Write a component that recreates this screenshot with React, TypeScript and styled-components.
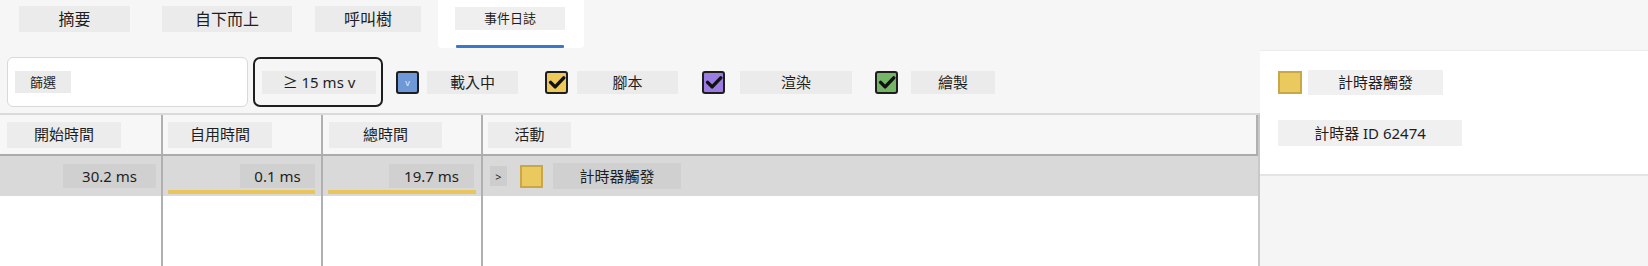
import React from "react";
import styled, { createGlobalStyle } from "styled-components";

const Global = createGlobalStyle`
  html, body { margin: 0; padding: 0; background: #f6f6f6; }
  body { font-family: "Noto Sans", "Noto Sans CJK TC", sans-serif; color: #1e1e1e; }
  * { box-sizing: border-box; }
`;

const Page = styled.div`
  width: 1648px;
  height: 266px;
  overflow: hidden;
  display: flex;
  flex-direction: column;
  background: #f6f6f6;
`;

const TabBar = styled.div`
  height: 48px;
  flex-shrink: 0;
  display: flex;
  align-items: flex-start;
  padding-left: 19px;
`;

const Tab = styled.div<{ $w: number; $ml: number }>`
  width: ${(p) => p.$w}px;
  margin-left: ${(p) => p.$ml}px;
  margin-top: 6px;
  height: 26px;
  background: #ebebeb;
  display: flex;
  align-items: center;
  justify-content: center;
  font-size: 16px;
  line-height: 1;
`;

const ActiveTab = styled.div`
  width: 146px;
  height: 48px;
  margin-left: 17px;
  background: #ffffff;
  border-radius: 0 0 4px 4px;
  display: flex;
  flex-direction: column;
  padding: 7px 0 0 17px;
`;

const ActiveLabel = styled.div`
  width: 110px;
  height: 23px;
  background: #efefef;
  display: flex;
  align-items: center;
  justify-content: center;
  font-size: 13px;
  line-height: 1;
`;

const Underline = styled.div`
  width: 108px;
  height: 3px;
  margin: auto 0 0 1px;
  background: #3a78c9;
  border-radius: 1px;
`;

const Body = styled.div`
  flex: 1;
  display: flex;
  min-height: 0;
`;

const LeftCol = styled.div`
  width: 1260px;
  display: flex;
  flex-direction: column;
`;

const FilterRow = styled.div`
  height: 65px;
  flex-shrink: 0;
  display: flex;
  align-items: center;
  padding: 9px 0 6px 7px;
`;

const SearchBox = styled.div`
  width: 241px;
  height: 50px;
  background: #ffffff;
  border: 1px solid #d9d9d9;
  border-radius: 6px;
  display: flex;
  align-items: center;
  padding-left: 7px;
`;

const Chip = styled.div<{ $w: number; $h?: number; $ml?: number; $bg?: string; $fs?: number }>`
  width: ${(p) => p.$w}px;
  height: ${(p) => p.$h ?? 23}px;
  margin-left: ${(p) => p.$ml ?? 0}px;
  background: ${(p) => p.$bg ?? "#ebebeb"};
  font-size: ${(p) => p.$fs ?? 15}px;
  line-height: 1;
  flex-shrink: 0;
  display: flex;
  align-items: center;
  justify-content: center;
  white-space: nowrap;
`;

const Dropdown = styled.div`
  width: 130px;
  height: 50px;
  margin-left: 5px;
  border: 2px solid #1e1e1e;
  border-radius: 7px;
  display: flex;
  align-items: center;
  padding-left: 7px;
`;

const Check = styled.div<{ $color: string; $ml: number }>`
  width: 23px;
  height: 23px;
  margin-left: ${(p) => p.$ml}px;
  flex-shrink: 0;
  background: ${(p) => p.$color};
  border: 2px solid #1e1e1e;
  border-radius: 3px;
  display: flex;
  align-items: center;
  justify-content: center;
  color: #e6ecf8;
  font-size: 9px;
  line-height: 1;
`;

const Table = styled.div`
  flex: 1;
  display: grid;
  grid-template-columns: 163px 160px 160px 1fr;
  grid-template-rows: 41px 40px 1fr;
  border-top: 2px solid #dadada;
  border-right: 2px solid #c9c9c9;
  background: #ffffff;
  width: 1260px;
`;

const HeadCell = styled.div<{ $pl: number }>`
  background: #f7f7f7;
  border-right: 2px solid #b0b0b0;
  border-bottom: 2px solid #ababab;
  display: flex;
  align-items: center;
  padding-left: ${(p) => p.$pl}px;
  &:last-child { border-right: none; }
`;

const DataCell = styled.div<{ $pr: number }>`
  background: #d9d9d9;
  border-right: 2px solid #b0b0b0;
  display: flex;
  flex-direction: column;
  align-items: flex-end;
  padding: 8px ${(p) => p.$pr}px 0 0;
`;

const Bar = styled.div<{ $mr: number }>`
  align-self: stretch;
  height: 4px;
  margin: auto ${(p) => p.$mr}px 2px 5px;
  background: #e8c65c;
`;

const ActivityCell = styled.div`
  background: #d9d9d9;
  display: flex;
  align-items: center;
  padding-left: 7px;
`;

const Expander = styled.div`
  width: 17px;
  height: 20px;
  background: #cdcdcd;
  font-size: 11px;
  line-height: 1;
  display: flex;
  align-items: center;
  justify-content: center;
`;

const Swatch = styled.div<{ $ml: number; $h?: number; $w?: number }>`
  width: ${(p) => p.$w ?? 23}px;
  height: ${(p) => p.$h ?? 23}px;
  margin-left: ${(p) => p.$ml}px;
  flex-shrink: 0;
  background: #eac95f;
  border: 2px solid #c9a746;
`;

const EmptyCell = styled.div`
  border-right: 2px solid #b0b0b0;
  &:last-child { border-right: none; }
`;

const RightCol = styled.div`
  flex: 1;
  display: flex;
  flex-direction: column;
  padding-top: 2px;
`;

const Panel = styled.div`
  height: 124px;
  background: #ffffff;
  border-top: 1px solid #ececec;
  display: flex;
  flex-direction: column;
  padding: 19px 0 0 18px;
`;

const PanelRow = styled.div<{ $mt?: number }>`
  display: flex;
  align-items: center;
  margin-top: ${(p) => p.$mt ?? 0}px;
`;

const PanelRest = styled.div`
  flex: 1;
  border-top: 2px solid #e4e4e4;
  background: #f5f5f5;
`;

const CheckMark = () => (
  <svg width="18" height="18" viewBox="0 0 24 24">
    <path d="M3.5 12.5l6 6L21 6.5" fill="none" stroke="#111" strokeWidth="4.6" strokeLinecap="round" strokeLinejoin="round" />
  </svg>
);

const filters = [
  { color: "#6e98d8", ml: 13, label: "載入中", lw: 91, lml: 8, checked: false },
  { color: "#ecc95a", ml: 27, label: "腳本", lw: 101, lml: 9, checked: true },
  { color: "#9b7ce0", ml: 24, label: "渲染", lw: 112, lml: 15, checked: true },
  { color: "#74b566", ml: 23, label: "繪製", lw: 84, lml: 13, checked: true },
];

export default function App() {
  return (
    <Page>
      <Global />
      <TabBar>
        <Tab $w={111} $ml={0}>摘要</Tab>
        <Tab $w={130} $ml={32}>自下而上</Tab>
        <Tab $w={106} $ml={23}>呼叫樹</Tab>
        <ActiveTab>
          <ActiveLabel>事件日誌</ActiveLabel>
          <Underline />
        </ActiveTab>
      </TabBar>
      <Body>
        <LeftCol>
          <FilterRow>
            <SearchBox>
              <Chip $w={56} $h={22} $fs={13}>篩選</Chip>
            </SearchBox>
            <Dropdown>
              <Chip $w={114}>≥ 15 ms v</Chip>
            </Dropdown>
            {filters.map((f) => (
              <React.Fragment key={f.label}>
                <Check $color={f.color} $ml={f.ml}>{f.checked ? <CheckMark /> : "v"}</Check>
                <Chip $w={f.lw} $ml={f.lml}>{f.label}</Chip>
              </React.Fragment>
            ))}
          </FilterRow>
          <Table>
            <HeadCell $pl={7}><Chip $w={114} $h={26} $bg="#ececec">開始時間</Chip></HeadCell>
            <HeadCell $pl={5}><Chip $w={104} $h={26} $bg="#ececec">自用時間</Chip></HeadCell>
            <HeadCell $pl={6}><Chip $w={113} $h={26} $bg="#ececec">總時間</Chip></HeadCell>
            <HeadCell $pl={5}><Chip $w={83} $h={26} $bg="#ececec">活動</Chip></HeadCell>

            <DataCell $pr={5}><Chip $w={93} $h={24} $bg="#d0d0d0">30.2 ms</Chip></DataCell>
            <DataCell $pr={6}>
              <Chip $w={75} $h={24} $bg="#d0d0d0">0.1 ms</Chip>
              <Bar $mr={0} />
            </DataCell>
            <DataCell $pr={7}>
              <Chip $w={85} $h={24} $bg="#d0d0d0">19.7 ms</Chip>
              <Bar $mr={-2} />
            </DataCell>
            <ActivityCell>
              <Expander>&gt;</Expander>
              <Swatch $ml={13} />
              <Chip $w={128} $h={26} $ml={10} $bg="#d0d0d0">計時器觸發</Chip>
            </ActivityCell>

            <EmptyCell />
            <EmptyCell />
            <EmptyCell />
            <EmptyCell />
          </Table>
        </LeftCol>
        <RightCol>
          <Panel>
            <PanelRow>
              <Swatch $ml={0} $w={24} />
              <Chip $w={135} $h={25} $ml={6} $bg="#f0f0f0">計時器觸發</Chip>
            </PanelRow>
            <PanelRow $mt={25}>
              <Chip $w={184} $h={26} $bg="#f0f0f0">計時器 ID 62474</Chip>
            </PanelRow>
          </Panel>
          <PanelRest />
        </RightCol>
      </Body>
    </Page>
  );
}
